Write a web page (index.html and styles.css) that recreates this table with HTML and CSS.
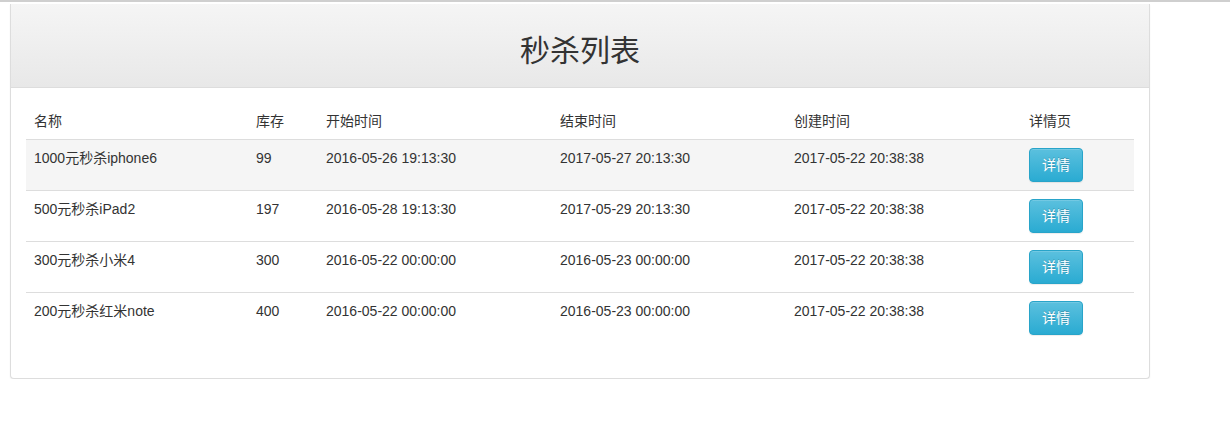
FILE: index.html
```html
<!DOCTYPE html>
<html lang="zh-CN">
<head>
<meta charset="utf-8">
<title>秒杀列表</title>
<link rel="stylesheet" href="styles.css">
</head>
<body>
<div class="topbar"></div>
<div class="panel">
  <div class="panel-heading">
    <h2 class="title">秒杀列表</h2>
  </div>
  <div class="panel-body">
    <table class="table">
      <thead>
        <tr>
          <th class="c-name">名称</th>
          <th class="c-stock">库存</th>
          <th class="c-time">开始时间</th>
          <th class="c-time">结束时间</th>
          <th class="c-time2">创建时间</th>
          <th class="c-op">详情页</th>
        </tr>
      </thead>
      <tbody>
        <tr class="hover">
          <td>1000元秒杀iphone6</td>
          <td>99</td>
          <td>2016-05-26 19:13:30</td>
          <td>2017-05-27 20:13:30</td>
          <td>2017-05-22 20:38:38</td>
          <td><a class="btn" href="#">详情</a></td>
        </tr>
        <tr>
          <td>500元秒杀iPad2</td>
          <td>197</td>
          <td>2016-05-28 19:13:30</td>
          <td>2017-05-29 20:13:30</td>
          <td>2017-05-22 20:38:38</td>
          <td><a class="btn" href="#">详情</a></td>
        </tr>
        <tr>
          <td>300元秒杀小米4</td>
          <td>300</td>
          <td>2016-05-22 00:00:00</td>
          <td>2016-05-23 00:00:00</td>
          <td>2017-05-22 20:38:38</td>
          <td><a class="btn" href="#">详情</a></td>
        </tr>
        <tr>
          <td>200元秒杀红米note</td>
          <td>400</td>
          <td>2016-05-22 00:00:00</td>
          <td>2016-05-23 00:00:00</td>
          <td>2017-05-22 20:38:38</td>
          <td><a class="btn" href="#">详情</a></td>
        </tr>
      </tbody>
    </table>
  </div>
</div>
</body>
</html>
```
FILE: styles.css
```css
* { box-sizing: border-box; }
html, body { margin: 0; padding: 0; background: #fff; }
body {
  font-family: "Liberation Sans", Arial, "Noto Sans CJK SC", sans-serif;
  font-size: 14px;
  line-height: 20px;
  color: #333;
}
.topbar {
  height: 2px;
  background: #cfcfcf;
}
.panel {
  width: 1140px;
  margin: 2px 0 0 10px;
  border: 1px solid #ddd;
  border-top: none;
  border-radius: 0 0 4px 4px;
  box-shadow: 0 1px 2px rgba(0,0,0,0.05);
  background: #fff;
}
.panel-heading {
  padding: 10px 15px;
  border-bottom: 1px solid #ddd;
  background: linear-gradient(to bottom, #f5f5f5 0%, #e8e8e8 100%);
  text-align: center;
}
.title {
  margin: 20px 0 10px;
  font-family: "Liberation Sans", "Noto Sans CJK SC", sans-serif;
  font-size: 30px;
  font-weight: 400;
  line-height: 33px;
  color: #333;
}
.panel-body {
  padding: 15px;
}
.table {
  width: 100%;
  border-collapse: collapse;
  border-spacing: 0;
  margin-bottom: 20px;
}
.table th, .table td {
  padding: 8px;
  text-align: left;
  vertical-align: top;
  line-height: 20px;
}
.table th {
  font-weight: 400;
  border-bottom: 1px solid #ddd;
}
.table td {
  border-top: 1px solid #ddd;
}
.table tbody tr:first-child td { border-top: none; }
.table tr.hover td { background: #f5f5f5; }
.c-name { width: 222px; }
.c-stock { width: 70px; }
.c-time { width: 234px; }
.c-time2 { width: 235px; }
.c-op { width: 113px; }
.btn {
  display: inline-block;
  height: 34px;
  padding: 6px 12px;
  font-size: 14px;
  line-height: 20px;
  color: #fff;
  text-decoration: none;
  border: 1px solid #28a4c9;
  border-radius: 4px;
  background: linear-gradient(to bottom, #5bc0de 0%, #2aabd2 100%);
  box-shadow: inset 0 1px 0 rgba(255,255,255,0.15), 0 1px 1px rgba(0,0,0,0.075);
  text-shadow: 0 -1px 0 rgba(0,0,0,0.2);
}
```
